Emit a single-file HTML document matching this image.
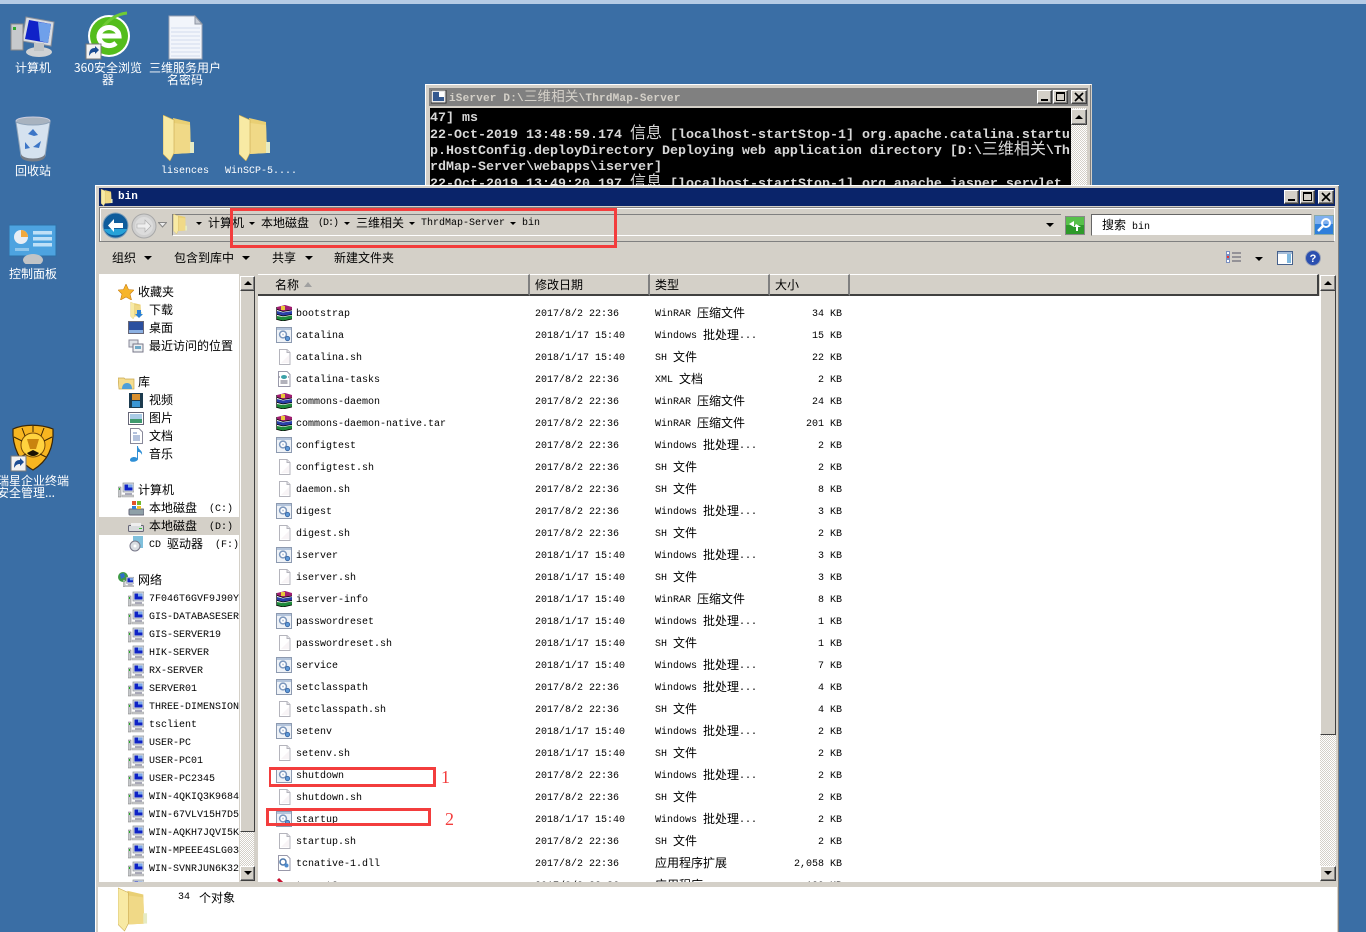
<!DOCTYPE html>
<html><head><meta charset="utf-8"><title>bin</title>
<style>
*{box-sizing:border-box}
html,body{margin:0;padding:0;width:1366px;height:932px;overflow:hidden}
body{position:relative;background:#3a6ea5;font:10px/12px "Liberation Mono","WenQuanYi Zen Hei",monospace;color:#000}
div,span,svg{position:absolute}
b{font:12px/12px "WenQuanYi Zen Hei","Noto Sans CJK SC",sans-serif}
svg{overflow:hidden}
.l{color:#fff;white-space:nowrap;text-align:center;font:12px/12px "WenQuanYi Zen Hei","Noto Sans CJK SC",sans-serif}
.m{color:#fff;white-space:nowrap;font:10px/12px "Liberation Mono",monospace}
.btn{background:#d4d0c8;border:1px solid;border-color:#fff #404040 #404040 #fff;box-shadow:inset -1px -1px #808080}
.d{width:0;height:0;border-style:solid;border-color:#000 transparent transparent;border-width:4px 4px 0}
.d3{width:0;height:0;border-style:solid;border-color:#000 transparent transparent;border-width:3px 3px 0}
.u{width:0;height:0;border-style:solid;border-color:transparent transparent #000;border-width:0 4px 4px}
.dith{background:repeating-conic-gradient(#d4d0c8 0 25%,#fff 0 50%) 0 0/2px 2px}
.s{white-space:nowrap;line-height:18px;height:18px;margin-top:2px}
.s b{position:relative;top:1px}
.g{font:12px/18px "WenQuanYi Zen Hei","Noto Sans CJK SC",sans-serif;margin-top:0}
.tb{font:12px/16px "WenQuanYi Zen Hei","Noto Sans CJK SC",sans-serif;white-space:nowrap}
.con{color:#d8d8d8;font:bold 13.33px/16px "Liberation Mono",monospace;white-space:nowrap;left:430px}
.con b{font:16px/16px "WenQuanYi Zen Hei","Noto Sans CJK SC",sans-serif}
.r{height:22px;width:1060px;left:0}
.r svg{left:276px;top:3px;width:16px;height:16px}
.r span{top:2px;line-height:22px;white-space:nowrap}
.r b{position:relative;top:1px}
.n{left:296px}.e{left:535px}.y{left:655px}.z{left:762px;width:80px;text-align:right}
.hd{background:#d4d0c8;top:274px;height:22px;border-top:1px solid #fff;border-bottom:2px solid #404040;border-right:2px solid #808080}
.rb{border:3px solid #f33d3d}
</style></head><body>
<svg width="0" height="0" style="left:0;top:0">
<defs>
<symbol id="fo" viewBox="0 0 32 46"><path d="M10 3 27 7 28 38 10 39z" fill="#e9cf74"/><path d="M11 8 27 10 28 38 11 39z" fill="#f0d987"/><path d="M0 0 11 5 11 38 7 46 0 39z" fill="#f8eaa4" stroke="#c9a94f" stroke-width=".6"/><rect x="27" y="27" width="4" height="11" fill="#e6ebc4"/></symbol>
<symbol id="pc" viewBox="0 0 46 44"><path d="M16 3 44 8 41 32 12 27z" fill="#d8dce2" stroke="#8a8f98"/><path d="M19 6 41 10 38 29 15 25z" fill="#1022c8"/><path d="M28 8 41 10 38 29 30 27z" fill="#6fa0ea"/><ellipse cx="29" cy="38" rx="13" ry="5" fill="#d0d2d4"/><rect x="24" y="29" width="10" height="8" fill="#c0c4c6"/><rect x="1" y="10" width="12" height="26" fill="#c7c9cc" stroke="#888"/><rect x="3" y="13" width="3" height="3" fill="#2ea82e"/></symbol>
<symbol id="sp" viewBox="0 0 16 16"><rect x="5" y="1" width="11" height="9" fill="#d5d9df" stroke="#8b9099" stroke-width=".7"/><rect x="6.500" y="2.500" width="8" height="6" fill="#0e22c6"/><rect x="10" y="2.500" width="4.500" height="3" fill="#7fa9ea"/><rect x="7" y="11" width="7" height="2" fill="#aab"/><rect x="4" y="13" width="12" height="2" fill="#c8c9cb" stroke="#999" stroke-width=".4"/><rect x="0" y="5" width="3" height="10" fill="#c7c9cc" stroke="#777" stroke-width=".5"/><rect x="1" y="6" width="1" height="2" fill="#2a2"/></symbol>
<symbol id="rar" viewBox="0 0 16 16"><path d="M1 2 9 0 16 2V5L7 6.500 1 4.500z" fill="#a01e70"/><rect x="5" y="1" width="4" height="4" fill="#e8c83a"/><path d="M1 6 7 7.500 16 6V9.500L7 11 1 9.500z" fill="#2a3fa8"/><path d="M1 11 7 12 16 10.500V14L7 16 1 14.500z" fill="#1f8a3a"/><path d="M1 4.500 7 6.500 16 5M1 9.500 7 11 16 9.500M1 14.500 7 16 16 14" stroke="#000" stroke-width=".8" fill="none"/><path d="M.5 2V15" stroke="#555"/></symbol>
<symbol id="bat" viewBox="0 0 16 16"><rect x=".5" y=".5" width="15" height="15" fill="#eef2f7" stroke="#8d9ab0"/><rect x="1" y="1" width="14" height="2" fill="#b4c5dc"/><circle cx="7" cy="7.500" r="3.400" fill="#fff" stroke="#7c97bd" stroke-width="1.500"/><circle cx="7" cy="7.500" r="1" fill="#b7c6da"/><circle cx="11.500" cy="11.500" r="2.100" fill="#5f9ad8" stroke="#3d6ba8"/></symbol>
<symbol id="sh" viewBox="0 0 16 16"><path d="M3.500.5H11L14 3.500V15.500H3.500z" fill="#fff" stroke="#b4b4bc"/><path d="M11 .5V3.500H14" fill="#e6e6ea" stroke="#b4b4bc"/><path d="M5 14 13 6v8z" fill="#f8f4f6"/></symbol>
<symbol id="xml" viewBox="0 0 16 16"><path d="M2.500.5H11L14 3.500V15.500H2.500z" fill="#fff" stroke="#99a"/><ellipse cx="8" cy="6" rx="3" ry="2" fill="#3da2a8"/><path d="M4 6 2.800 6M12 6l1 0M4.500 10h7M4.500 12h7" stroke="#667"/></symbol>
<symbol id="dll" viewBox="0 0 16 16"><path d="M2.500.5H11L14 3.500V15.500H2.500z" fill="#fff" stroke="#99a"/><circle cx="7" cy="7" r="3" fill="#fff" stroke="#4a76ab" stroke-width="1.500"/><circle cx="10.500" cy="10.500" r="2" fill="#4d8ccf"/></symbol>
<symbol id="net" viewBox="0 0 16 16"><circle cx="5" cy="5" r="5" fill="#3e9a44"/><path d="M2 2 6 1 7 5 3 7zM7 6l2 2" fill="#2f6fc9"/><use href="#sp" x="5" y="4" width="11" height="12"/></symbol>
</defs></svg>

<div style="left:0;top:0;width:1366px;height:4px;background:#b5cbe5"></div>

<!-- desktop icons -->
<svg style="left:10px;top:14px" width="46" height="44"><use href="#pc"/></svg>
<div class="l" style="left:8px;top:62px;width:50px">计算机</div>
<svg style="left:85px;top:11px" width="48" height="49" viewBox="0 0 48 49">
<circle cx="24" cy="25" r="21" fill="#fff"/><circle cx="24" cy="25" r="19" fill="#54bd1c"/><path d="M42 2C32 3 22 9 16 19" stroke="#6fcb34" stroke-width="3" fill="none"/><path d="M14 25H34A10 9 0 1 0 31 32" stroke="#fff" stroke-width="5" fill="none"/>
<rect x="1" y="33" width="15" height="15" fill="#f2f2f2" stroke="#777"/><path d="M4 45c0-6 2-8 6-8v-2l4 4-4 4v-2c-3 0-4 1-6 4z" fill="#1c4d93"/></svg>
<div class="l" style="left:70px;top:62px;width:76px">360安全浏览<br>器</div>
<svg style="left:168px;top:15px" width="35" height="45" viewBox="0 0 35 45"><path d="M1 1H27L34 9V44H1z" fill="#f2f5fb" stroke="#9aa3b4"/><path d="M27 1V9H34z" fill="#c7ccd5" stroke="#8d95a3"/><path d="M3 13h29M3 17h29M3 21h29M3 25h29M3 29h29M3 33h29M3 37h29M3 41h29" stroke="#d3dbec"/></svg>
<div class="l" style="left:145px;top:62px;width:80px">三维服务用户<br>名密码</div>

<svg style="left:14px;top:116px" width="38" height="46" viewBox="0 0 38 46"><ellipse cx="19" cy="5" rx="17" ry="4" fill="#a8b3bf" stroke="#ccd"/><path d="M2 6 7 40c2 5 22 5 24 0L36 6C28 10 10 10 2 6z" fill="#d5e2ef" stroke="#8fa3b8"/><path d="M14 18l5-5 5 6-4 1zM11 26l5 6-5 1zM27 25l-2 7-6-1z" fill="#3c76c7"/><path d="M7 38c2 6 22 6 24 0v3c-2 6-22 6-24 0z" fill="#777d86"/></svg>
<div class="l" style="left:8px;top:165px;width:50px">回收站</div>
<svg style="left:163px;top:115px" width="32" height="46"><use href="#fo"/></svg>
<div class="m" style="left:161px;top:166px">lisences</div>
<svg style="left:239px;top:115px" width="32" height="46"><use href="#fo"/></svg>
<div class="m" style="left:225px;top:166px">WinSCP-5....</div>

<svg style="left:9px;top:224px" width="48" height="42" viewBox="0 0 48 42"><rect x="0" y="1" width="47" height="31" fill="#4da3e0" stroke="#2d6fa5"/><circle cx="12" cy="13" r="7" fill="#e8eef5"/><path d="M12 13V6a7 7 0 0 1 7 7z" fill="#f1a93d"/><rect x="24" y="7" width="19" height="3.500" fill="#bfe0f7"/><rect x="24" y="13" width="19" height="3.500" fill="#bfe0f7"/><rect x="24" y="19" width="19" height="3.500" fill="#bfe0f7"/><rect x="6" y="24" width="14" height="3" fill="#8fc6ec"/><ellipse cx="24" cy="36" rx="10" ry="6" fill="#c2c4c6"/><rect x="10" y="40" width="30" height="2" fill="#3a6ea5"/></svg>
<div class="l" style="left:3px;top:268px;width:60px">控制面板</div>

<svg style="left:10px;top:423px" width="46" height="50" viewBox="0 0 46 50"><path d="M3 6C14 1 30 1 43 6 44 24 38 38 23 47 10 40 2 24 3 6z" fill="#f7b520" stroke="#3a2606" stroke-width="1.200"/><circle cx="23" cy="22" r="12" fill="#ffd23f" stroke="#7a4a06"/><path d="M17 16h12l-3 10h-6z" fill="#c9830e"/><path d="M17 30c3 4 9 4 12 0l-6-3z" fill="#1c1204"/><path d="M4 14 12 18M42 14 34 18M12 5l3 8M34 5l-3 8M23 3v6M10 34l6-3M36 34l-6-3" stroke="#3a2606"/><rect x="1" y="33" width="15" height="15" fill="#f2f2f2" stroke="#777"/><path d="M4 45c0-6 2-8 6-8v-2l4 4-4 4v-2c-3 0-4 1-6 4z" fill="#1c4d93"/></svg>
<div class="l" style="left:-3px;top:475px;text-align:left">瑞星企业终端<br>安全管理...</div>

<!-- console window -->
<div style="left:425px;top:84px;width:667px;height:104px;background:#d4d0c8;border:1px solid #d4d0c8;border-top-color:#fff;border-left-color:#fff;box-shadow:inset -1px 0 #808080"></div>
<div style="left:429px;top:88px;width:659px;height:18px;background:#808080"></div>
<svg style="left:431px;top:90px" width="16" height="14"><rect width="15" height="13" fill="#e8e8e8" stroke="#333"/><rect x="2" y="2" width="11" height="9" fill="#35598f"/><rect x="8" y="2" width="5" height="5" fill="#fff"/></svg>
<div style="left:449px;top:89px;color:#d4d0c8;white-space:nowrap;font:bold 11px/13px 'Liberation Mono',monospace;letter-spacing:.2px">iServer D:\<b style="color:#d4d0c8;font-weight:normal;font-size:13.500px">三维相关</b>\ThrdMap-Server</div>
<div class="btn" style="left:1037px;top:90px;width:15px;height:14px"><div style="left:3px;bottom:2px;width:7px;height:2px;background:#000"></div></div>
<div class="btn" style="left:1053px;top:90px;width:15px;height:14px"><div style="left:2px;top:1px;width:9px;height:9px;border:1px solid #000;border-top-width:2px"></div></div>
<div class="btn" style="left:1071px;top:90px;width:16px;height:14px"><svg style="left:2px;top:1px" width="10" height="10"><path d="M1 1 9 9M9 1 1 9" stroke="#000" stroke-width="1.700"/></svg></div>
<div style="left:430px;top:108px;width:641px;height:80px;background:#000"></div>
<div class="dith" style="left:1071px;top:108px;width:16px;height:80px"></div>
<div class="btn" style="left:1071px;top:109px;width:16px;height:16px"><div class="u" style="left:3px;top:5px"></div></div>
<div class="con" style="top:111px">47] ms</div>
<div class="con" style="top:123px">22-Oct-2019 13:48:59.174 <b>信息</b> [localhost-startStop-1] org.apache.catalina.startu</div>
<div class="con" style="top:139px">p.HostConfig.deployDirectory Deploying web application directory [D:\<b>三维相关</b>\Th</div>
<div class="con" style="top:160px">rdMap-Server\webapps\iserver]</div>
<div style="left:430px;top:172px;width:641px;height:13px;overflow:hidden"><div class="con" style="left:0;top:0">22-Oct-2019 13:49:20.197 <b>信息</b> [localhost-startStop-1] org.apache.jasper.servlet</div></div>

<!-- explorer window -->
<div style="left:95px;top:185px;width:1244px;height:747px;background:#d4d0c8;box-shadow:inset 1px 1px #fff,inset -1px 0 #808080"></div>
<div style="left:99px;top:188px;width:1236px;height:18px;background:#0a246a"></div>
<svg style="left:100px;top:189px" width="14" height="17"><use href="#fo"/></svg>
<div style="left:118px;top:191px;color:#fff;font:bold 11px/13px 'Liberation Mono',monospace">bin</div>
<div class="btn" style="left:1284px;top:190px;width:15px;height:14px"><div style="left:3px;bottom:2px;width:7px;height:2px;background:#000"></div></div>
<div class="btn" style="left:1300px;top:190px;width:15px;height:14px"><div style="left:2px;top:1px;width:9px;height:9px;border:1px solid #000;border-top-width:2px"></div></div>
<div class="btn" style="left:1318px;top:190px;width:16px;height:14px"><svg style="left:2px;top:1px" width="10" height="10"><path d="M1 1 9 9M9 1 1 9" stroke="#000" stroke-width="1.700"/></svg></div>

<!-- address row -->
<div style="left:99px;top:207px;width:1236px;height:35px;border:1px solid #808080;border-right-color:#fff;border-bottom-color:#808080;box-shadow:inset 1px 1px #fff"></div>
<div style="left:172px;top:214px;width:889px;height:22px;border-top:1px solid #808080;border-bottom:1px solid #fff;border-left:1px solid #808080"></div>
<svg style="left:102px;top:212px" width="27" height="27" viewBox="0 0 27 27"><circle cx="13.500" cy="13.500" r="12.500" fill="#0f5d9c" stroke="#7f9fb8"/><path d="M2 17a12 9 0 0 0 23 0z" fill="#27a2d8"/><path d="M12 7 6 13.500 12 20v-4h9v-5h-9z" fill="#fff"/></svg>
<svg style="left:131px;top:213px" width="26" height="26" viewBox="0 0 26 26"><circle cx="13" cy="13" r="12" fill="#cfcfcf" stroke="#a8a8a8"/><circle cx="13" cy="13" r="9" fill="#dcdcdc"/><path d="M14 7 20 13 14 19v-4H6v-4h8z" fill="#eee" stroke="#aaa" stroke-width=".6"/></svg>
<svg style="left:158px;top:222px" width="9" height="6"><path d="M.5.500H8.500L4.500 5z" fill="#eee" stroke="#888"/></svg>
<svg style="left:173px;top:214px" width="15" height="20"><use href="#fo"/></svg>
<div class="d3" style="left:196px;top:222px"></div>
<div style="left:208px;top:217px;white-space:nowrap"><b>计算机</b></div>
<div class="d3" style="left:249px;top:222px"></div>
<div style="left:261px;top:217px;white-space:nowrap"><b>本地磁盘</b></div>
<div style="left:318px;top:218px;white-space:nowrap;letter-spacing:-1px">(D:)</div>
<div class="d3" style="left:344px;top:222px"></div>
<div style="left:356px;top:217px;white-space:nowrap"><b>三维相关</b></div>
<div class="d3" style="left:409px;top:222px"></div>
<div style="left:421px;top:218px;white-space:nowrap">ThrdMap-Server</div>
<div class="d3" style="left:510px;top:222px"></div>
<div style="left:522px;top:218px;white-space:nowrap">bin</div>
<div class="d" style="left:1046px;top:223px"></div>
<svg style="left:1065px;top:216px" width="20" height="19"><rect x=".5" y=".5" width="19" height="18" fill="#2e9a2a" stroke="#888"/><rect x="1" y="1" width="18" height="8" fill="#57c04a"/><path d="M9 5 4 8l5 3V9h0zM11 8l5 3-3 0v4h-2v-4H9z" fill="#fff"/></svg>
<div style="left:1091px;top:214px;width:221px;height:22px;background:#fff;border:1px solid;border-color:#666 #d4d0c8 #d4d0c8 #666"></div>
<div style="left:1102px;top:219px;white-space:nowrap"><b>搜索</b> bin</div>
<svg style="left:1314px;top:215px" width="20" height="20"><rect x=".5" y=".5" width="19" height="19" fill="#2f7fdb" stroke="#8aa"/><rect x="1" y="1" width="18" height="8" fill="#7fb0ef"/><circle cx="12" cy="8" r="4" fill="none" stroke="#fff" stroke-width="2"/><path d="M9 11 4 16" stroke="#fff" stroke-width="2.500"/></svg>

<!-- toolbar -->
<div class="tb" style="left:112px;top:250px">组织</div><div class="d" style="left:144px;top:256px"></div>
<div class="tb" style="left:174px;top:250px">包含到库中</div><div class="d" style="left:242px;top:256px"></div>
<div class="tb" style="left:272px;top:250px">共享</div><div class="d" style="left:305px;top:256px"></div>
<div class="tb" style="left:334px;top:250px">新建文件夹</div>
<svg style="left:1226px;top:251px" width="16" height="13"><path d="M6 2h9M6 6h9M6 10h9" stroke="#556"/><rect x=".5" y=".5" width="3" height="3" fill="#fff" stroke="#7a8fc0"/><rect x=".5" y="4.500" width="3" height="3" fill="#e33" stroke="#7a8fc0"/><rect x=".5" y="8.500" width="3" height="3" fill="#fff" stroke="#7a8fc0"/></svg>
<div class="d" style="left:1255px;top:257px"></div>
<svg style="left:1277px;top:251px" width="16" height="14"><rect x=".5" y=".5" width="15" height="13" fill="#fff" stroke="#46618c"/><rect x="10" y="3" width="4" height="9" fill="#7fb8df"/><rect x="1" y="1" width="14" height="2" fill="#a6bdd8"/></svg>
<svg style="left:1305px;top:250px" width="16" height="16"><circle cx="8" cy="8" r="7.500" fill="#2b4fb0" stroke="#9aa3b8"/><text x="8" y="12" fill="#fff" font-family="Liberation Sans" font-size="11" font-weight="bold" text-anchor="middle">?</text></svg>

<!-- panes -->
<div style="left:99px;top:274px;width:140px;height:608px;background:#fff"></div>
<div class="dith" style="left:240px;top:276px;width:14px;height:590px"></div>
<div style="left:240px;top:290px;width:15px;height:542px;background:#d4d0c8;border:1px solid;border-color:#fff #404040 #404040 #fff"></div>
<div class="btn" style="left:240px;top:276px;width:15px;height:15px"><div class="u" style="left:3px;top:4px"></div></div>
<div class="btn" style="left:240px;top:866px;width:15px;height:15px"><div class="d" style="left:3px;top:4px"></div></div>
<div style="left:258px;top:296px;width:1062px;height:586px;background:#fff"></div>

<!-- headers -->
<div class="hd" style="left:258px;width:272px"></div>
<div class="hd" style="left:530px;width:120px"></div>
<div class="hd" style="left:650px;width:120px"></div>
<div class="hd" style="left:770px;width:80px"></div>
<div class="hd" style="left:850px;width:469px;border-right:2px solid #404040"></div>
<div class="tb" style="left:275px;top:277px">名称</div>
<svg style="left:304px;top:282px" width="8" height="5"><path d="M4 0 8 5H0z" fill="#a0a0a0"/></svg>
<div class="tb" style="left:535px;top:277px">修改日期</div>
<div class="tb" style="left:655px;top:277px">类型</div>
<div class="tb" style="left:775px;top:277px">大小</div>

<!-- right scrollbar -->
<div class="dith" style="left:1320px;top:275px;width:16px;height:606px"></div>
<div style="left:1320px;top:290px;width:16px;height:445px;background:#d4d0c8;border:1px solid;border-color:#fff #404040 #404040 #fff"></div>
<div class="btn" style="left:1320px;top:275px;width:16px;height:16px"><div class="u" style="left:3px;top:5px"></div></div>
<div class="btn" style="left:1320px;top:866px;width:16px;height:15px"><div class="d" style="left:3px;top:4px"></div></div>

<!-- sidebar -->
<div style="left:0;top:0;width:1366px;height:932px;clip-path:inset(274px 1127px 50px 99px)">
<div style="left:99px;top:517px;width:140px;height:18px;background:#d4d0c8"></div>
<svg style="left:118px;top:284px" width="16" height="16" viewBox="0 0 16 16"><path d="M8 0 10.500 5.500 16 6 12 10 13.500 16 8 13 2.500 16 4 10 0 6 5.500 5.500z" fill="#f7b52a" stroke="#c77c12" stroke-width=".6"/></svg>
<div class="s g" style="left:138px;top:283px">收藏夹</div>
<svg style="left:129px;top:302px" width="15" height="17"><use href="#fo"/><path d="M8 8h4v4h2l-4 4-4-4h2z" fill="#2b7fd6"/></svg><div class="s g" style="left:149px;top:301px">下载</div>
<svg style="left:128px;top:321px" width="16" height="14"><rect x=".5" y=".5" width="15" height="12" fill="#2b4f9f" stroke="#667"/><rect x="1" y="9" width="14" height="3" fill="#8bb0e2"/></svg><div class="s g" style="left:149px;top:319px">桌面</div>
<svg style="left:128px;top:339px" width="16" height="15"><rect x="1" y="1" width="9" height="7" fill="#dfe3e8" stroke="#889"/><rect x="5" y="5" width="10" height="8" fill="#eef0f2" stroke="#778"/><rect x="7" y="7" width="6" height="3" fill="#6fa8c7"/></svg><div class="s g" style="left:149px;top:337px">最近访问的位置</div>

<svg style="left:118px;top:376px" width="17" height="14" viewBox="0 0 17 14"><path d="M0 2h6l1 1h9v10H1z" fill="#f4dc8e" stroke="#c9a850" stroke-width=".7"/><path d="M4 13c0-4 2-6 5-6s5 2 5 6z" fill="#4d9fd9"/></svg>
<div class="s g" style="left:138px;top:373px">库</div>
<svg style="left:129px;top:393px" width="14" height="15"><rect width="14" height="15" fill="#1c3b4f"/><rect x="3" y="1" width="8" height="6" fill="#d9902e"/><rect x="3" y="8" width="8" height="6" fill="#3a96d4"/></svg><div class="s g" style="left:149px;top:391px">视频</div>
<svg style="left:128px;top:412px" width="16" height="13"><rect x=".5" y=".5" width="15" height="12" fill="#fff" stroke="#667"/><rect x="2" y="2" width="12" height="5" fill="#a9cbe6"/><rect x="2" y="7" width="12" height="4" fill="#3f9a6e"/></svg><div class="s g" style="left:149px;top:409px">图片</div>
<svg style="left:130px;top:428px" width="13" height="16"><path d="M.5.500H9L12.500 4V15.500H.5z" fill="#fff" stroke="#889"/><path d="M3 5h4M3 8h7M3 10h7M3 12h7" stroke="#6a86b8"/></svg><div class="s g" style="left:149px;top:427px">文档</div>
<svg style="left:129px;top:446px" width="14" height="17"><path d="M8 0h1c0 4 5 4 4 9-1-3-3-3-4-3v7c0 3-8 4-8 1 0-3 5-4 7-2z" fill="#2e8fd6"/></svg><div class="s g" style="left:149px;top:445px">音乐</div>

<svg style="left:118px;top:482px" width="16" height="16"><use href="#sp"/></svg><div class="s g" style="left:138px;top:481px">计算机</div>
<svg style="left:128px;top:500px" width="16" height="16" viewBox="0 0 16 16"><rect x="1" y="9" width="15" height="6" rx="1" fill="#8fa0a8" stroke="#667"/><rect x="4" y="1" width="4" height="4" fill="#e2512a"/><rect x="9" y="1" width="4" height="4" fill="#72b82e"/><rect x="4" y="6" width="4" height="3" fill="#2e7ed6"/><rect x="9" y="6" width="4" height="3" fill="#f0c028"/></svg><div class="s" style="left:149px;top:499px"><b>本地磁盘</b>&nbsp;&nbsp;(C:)</div>
<svg style="left:128px;top:519px" width="16" height="14"><rect x=".5" y="6.500" width="15" height="6" rx="1" fill="#d8dbdd" stroke="#667"/><rect x="3" y="4" width="10" height="3" fill="#eee"/><rect x="11" y="9" width="3" height="1" fill="#3b3"/></svg><div class="s" style="left:149px;top:517px"><b>本地磁盘</b>&nbsp;&nbsp;(D:)</div>
<svg style="left:129px;top:536px" width="15" height="16"><rect x="4" y="0" width="10" height="12" fill="#7fc0dc"/><circle cx="6" cy="10" r="5" fill="#d9dde2" stroke="#778"/><circle cx="6" cy="10" r="1.500" fill="#fff"/></svg><div class="s" style="left:149px;top:535px">CD&nbsp;<b>驱动器</b>&nbsp;&nbsp;(F:)</div>

<svg style="left:118px;top:572px" width="16" height="16"><use href="#net"/></svg><div class="s g" style="left:138px;top:571px">网络</div>

<svg style="left:128px;top:591px" width="16" height="16"><use href="#sp"/></svg><div class="s" style="left:149px;top:589px">7F046T6GVF9J90Y</div>
<svg style="left:128px;top:609px" width="16" height="16"><use href="#sp"/></svg><div class="s" style="left:149px;top:607px">GIS-DATABASESERVER</div>
<svg style="left:128px;top:627px" width="16" height="16"><use href="#sp"/></svg><div class="s" style="left:149px;top:625px">GIS-SERVER19</div>
<svg style="left:128px;top:645px" width="16" height="16"><use href="#sp"/></svg><div class="s" style="left:149px;top:643px">HIK-SERVER</div>
<svg style="left:128px;top:663px" width="16" height="16"><use href="#sp"/></svg><div class="s" style="left:149px;top:661px">RX-SERVER</div>
<svg style="left:128px;top:681px" width="16" height="16"><use href="#sp"/></svg><div class="s" style="left:149px;top:679px">SERVER01</div>
<svg style="left:128px;top:699px" width="16" height="16"><use href="#sp"/></svg><div class="s" style="left:149px;top:697px">THREE-DIMENSIONAL</div>
<svg style="left:128px;top:717px" width="16" height="16"><use href="#sp"/></svg><div class="s" style="left:149px;top:715px">tsclient</div>
<svg style="left:128px;top:735px" width="16" height="16"><use href="#sp"/></svg><div class="s" style="left:149px;top:733px">USER-PC</div>
<svg style="left:128px;top:753px" width="16" height="16"><use href="#sp"/></svg><div class="s" style="left:149px;top:751px">USER-PC01</div>
<svg style="left:128px;top:771px" width="16" height="16"><use href="#sp"/></svg><div class="s" style="left:149px;top:769px">USER-PC2345</div>
<svg style="left:128px;top:789px" width="16" height="16"><use href="#sp"/></svg><div class="s" style="left:149px;top:787px">WIN-4QKIQ3K9684</div>
<svg style="left:128px;top:807px" width="16" height="16"><use href="#sp"/></svg><div class="s" style="left:149px;top:805px">WIN-67VLV15H7D5</div>
<svg style="left:128px;top:825px" width="16" height="16"><use href="#sp"/></svg><div class="s" style="left:149px;top:823px">WIN-AQKH7JQVI5K</div>
<svg style="left:128px;top:843px" width="16" height="16"><use href="#sp"/></svg><div class="s" style="left:149px;top:841px">WIN-MPEEE4SLG03</div>
<svg style="left:128px;top:861px" width="16" height="16"><use href="#sp"/></svg><div class="s" style="left:149px;top:859px">WIN-SVNRJUN6K32</div>
<svg style="left:128px;top:879px" width="16" height="16"><use href="#sp"/></svg>
</div>

<!-- file list -->
<div style="left:0;top:0;width:1366px;height:932px;clip-path:inset(296px 46px 50px 258px)">
<div class="r" style="top:302px"><svg><use href="#rar"/></svg><span class="n">bootstrap</span><span class="e">2017/8/2 22:36</span><span class="y">WinRAR <b>压缩文件</b></span><span class="z">34 KB</span></div>
<div class="r" style="top:324px"><svg><use href="#bat"/></svg><span class="n">catalina</span><span class="e">2018/1/17 15:40</span><span class="y">Windows <b>批处理</b>...</span><span class="z">15 KB</span></div>
<div class="r" style="top:346px"><svg><use href="#sh"/></svg><span class="n">catalina.sh</span><span class="e">2018/1/17 15:40</span><span class="y">SH <b>文件</b></span><span class="z">22 KB</span></div>
<div class="r" style="top:368px"><svg><use href="#xml"/></svg><span class="n">catalina-tasks</span><span class="e">2017/8/2 22:36</span><span class="y">XML <b>文档</b></span><span class="z">2 KB</span></div>
<div class="r" style="top:390px"><svg><use href="#rar"/></svg><span class="n">commons-daemon</span><span class="e">2017/8/2 22:36</span><span class="y">WinRAR <b>压缩文件</b></span><span class="z">24 KB</span></div>
<div class="r" style="top:412px"><svg><use href="#rar"/></svg><span class="n">commons-daemon-native.tar</span><span class="e">2017/8/2 22:36</span><span class="y">WinRAR <b>压缩文件</b></span><span class="z">201 KB</span></div>
<div class="r" style="top:434px"><svg><use href="#bat"/></svg><span class="n">configtest</span><span class="e">2017/8/2 22:36</span><span class="y">Windows <b>批处理</b>...</span><span class="z">2 KB</span></div>
<div class="r" style="top:456px"><svg><use href="#sh"/></svg><span class="n">configtest.sh</span><span class="e">2017/8/2 22:36</span><span class="y">SH <b>文件</b></span><span class="z">2 KB</span></div>
<div class="r" style="top:478px"><svg><use href="#sh"/></svg><span class="n">daemon.sh</span><span class="e">2017/8/2 22:36</span><span class="y">SH <b>文件</b></span><span class="z">8 KB</span></div>
<div class="r" style="top:500px"><svg><use href="#bat"/></svg><span class="n">digest</span><span class="e">2017/8/2 22:36</span><span class="y">Windows <b>批处理</b>...</span><span class="z">3 KB</span></div>
<div class="r" style="top:522px"><svg><use href="#sh"/></svg><span class="n">digest.sh</span><span class="e">2017/8/2 22:36</span><span class="y">SH <b>文件</b></span><span class="z">2 KB</span></div>
<div class="r" style="top:544px"><svg><use href="#bat"/></svg><span class="n">iserver</span><span class="e">2018/1/17 15:40</span><span class="y">Windows <b>批处理</b>...</span><span class="z">3 KB</span></div>
<div class="r" style="top:566px"><svg><use href="#sh"/></svg><span class="n">iserver.sh</span><span class="e">2018/1/17 15:40</span><span class="y">SH <b>文件</b></span><span class="z">3 KB</span></div>
<div class="r" style="top:588px"><svg><use href="#rar"/></svg><span class="n">iserver-info</span><span class="e">2018/1/17 15:40</span><span class="y">WinRAR <b>压缩文件</b></span><span class="z">8 KB</span></div>
<div class="r" style="top:610px"><svg><use href="#bat"/></svg><span class="n">passwordreset</span><span class="e">2018/1/17 15:40</span><span class="y">Windows <b>批处理</b>...</span><span class="z">1 KB</span></div>
<div class="r" style="top:632px"><svg><use href="#sh"/></svg><span class="n">passwordreset.sh</span><span class="e">2018/1/17 15:40</span><span class="y">SH <b>文件</b></span><span class="z">1 KB</span></div>
<div class="r" style="top:654px"><svg><use href="#bat"/></svg><span class="n">service</span><span class="e">2018/1/17 15:40</span><span class="y">Windows <b>批处理</b>...</span><span class="z">7 KB</span></div>
<div class="r" style="top:676px"><svg><use href="#bat"/></svg><span class="n">setclasspath</span><span class="e">2017/8/2 22:36</span><span class="y">Windows <b>批处理</b>...</span><span class="z">4 KB</span></div>
<div class="r" style="top:698px"><svg><use href="#sh"/></svg><span class="n">setclasspath.sh</span><span class="e">2017/8/2 22:36</span><span class="y">SH <b>文件</b></span><span class="z">4 KB</span></div>
<div class="r" style="top:720px"><svg><use href="#bat"/></svg><span class="n">setenv</span><span class="e">2018/1/17 15:40</span><span class="y">Windows <b>批处理</b>...</span><span class="z">2 KB</span></div>
<div class="r" style="top:742px"><svg><use href="#sh"/></svg><span class="n">setenv.sh</span><span class="e">2018/1/17 15:40</span><span class="y">SH <b>文件</b></span><span class="z">2 KB</span></div>
<div class="r" style="top:764px"><svg><use href="#bat"/></svg><span class="n">shutdown</span><span class="e">2017/8/2 22:36</span><span class="y">Windows <b>批处理</b>...</span><span class="z">2 KB</span></div>
<div class="r" style="top:786px"><svg><use href="#sh"/></svg><span class="n">shutdown.sh</span><span class="e">2017/8/2 22:36</span><span class="y">SH <b>文件</b></span><span class="z">2 KB</span></div>
<div class="r" style="top:808px"><svg><use href="#bat"/></svg><span class="n">startup</span><span class="e">2018/1/17 15:40</span><span class="y">Windows <b>批处理</b>...</span><span class="z">2 KB</span></div>
<div class="r" style="top:830px"><svg><use href="#sh"/></svg><span class="n">startup.sh</span><span class="e">2017/8/2 22:36</span><span class="y">SH <b>文件</b></span><span class="z">2 KB</span></div>
<div class="r" style="top:852px"><svg><use href="#dll"/></svg><span class="n">tcnative-1.dll</span><span class="e">2017/8/2 22:36</span><span class="y"><b>应用程序扩展</b></span><span class="z">2,058 KB</span></div>
<div class="r" style="top:874px"><svg><path d="M2 2 12 12" stroke="#c8102e" stroke-width="3"/></svg><span class="n">tomcat8</span><span class="e">2017/8/2 22:36</span><span class="y"><b>应用程序</b></span><span class="z">129 KB</span></div>
</div>

<!-- status bar -->
<div style="left:98px;top:882px;width:1239px;height:5px;background:#d4d0c8"></div>
<div style="left:98px;top:887px;width:1239px;height:45px;background:#fff"></div>
<svg style="left:118px;top:887px" width="30" height="45"><use href="#fo"/></svg>
<div style="left:178px;top:892px;white-space:nowrap">34</div><div style="left:199px;top:892px;white-space:nowrap"><b>个对象</b></div>

<!-- red annotations -->
<div class="rb" style="left:230px;top:208px;width:387px;height:40px"></div>
<div class="rb" style="left:269px;top:767px;width:167px;height:20px;border-width:3px 3px 3px 2px"></div>
<div class="rb" style="left:266px;top:808px;width:165px;height:18px"></div>
<div style="left:441px;top:767px;color:#f33d3d;font:18px/20px 'Liberation Serif',serif">1</div>
<div style="left:445px;top:809px;color:#f33d3d;font:18px/20px 'Liberation Serif',serif">2</div>
</body></html>
